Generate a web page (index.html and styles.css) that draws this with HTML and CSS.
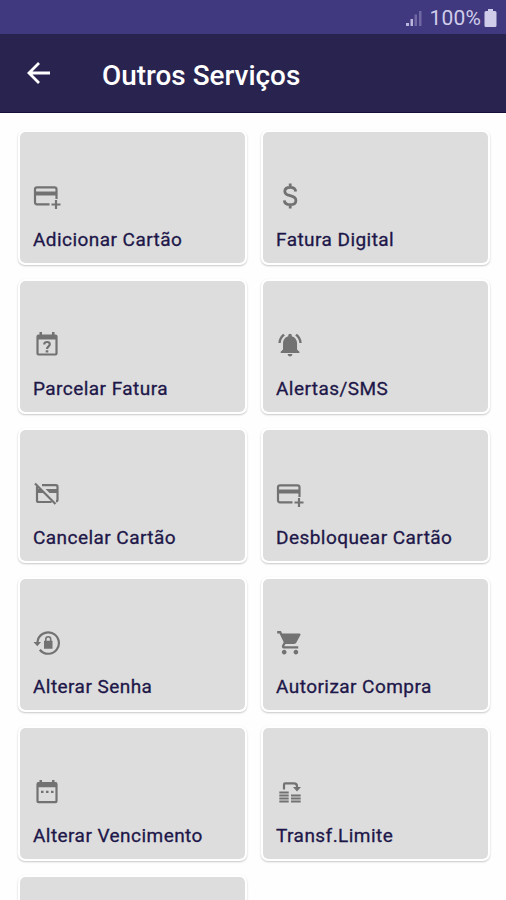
FILE: index.html
```html
<!DOCTYPE html>
<html lang="pt-BR">
<head>
<meta charset="utf-8">
<title>Outros Serviços</title>
<link rel="stylesheet" href="styles.css">
</head>
<body>
<div class="screen">
  <div class="status">
    <svg class="signal" width="17" height="18" viewBox="0 0 17 18"><path class="on" d="M1 14h3v3H1zM5.500 10h2.500v7H5.500z"/><path class="off" d="M9.500 5.500h2.500v11.500H9.500zM14 2h2.500v15H14z"/></svg>
    <span class="percent">100%</span>
    <svg class="battery" width="13" height="18" viewBox="0 0 13 18"><path d="M4 0h5v2h2q1.500 0 1.500 1.500v13q0 1.500-1.500 1.500H2Q.5 18 .5 16.500v-13Q.5 2 2 2h2z"/></svg>
  </div>
  <header class="bar">
    <svg class="back" width="26" height="24" viewBox="0 0 26 24"><path d="M24 12H3M13 2 3 12l10 10"/></svg>
    <h1 class="title">Outros Serviços</h1>
  </header>
  <main class="grid">
    <div class="card">
      <svg class="icon" viewBox="0 0 28 28"><path class="line" d="M16.500 22.300H4q-2 0-2-2V7.300q0-2 2-2h17.500q2 0 2 2V17M23 18v9M18.500 22.500h9"/><path d="M2 9.500h21.500v4H2z"/></svg>
      <span class="label">Adicionar Cartão</span>
    </div>
    <div class="card">
      <svg class="icon" viewBox="0 0 28 28"><path class="line dollar" d="M19.700 9.500C19.400 7 17.500 5.400 14.200 5.400c-3.300 0-5.400 1.600-5.400 4 0 2.600 2.300 3.500 5.400 4.300 3.300.8 5.700 1.900 5.700 4.700 0 2.700-2.300 4.300-5.700 4.300-3.600 0-5.700-1.700-5.900-4.400M14.200 1.500v4M14.200 22.700v3.800"/></svg>
      <span class="label">Fatura Digital</span>
    </div>
    <div class="card">
      <svg class="icon" viewBox="0 0 28 28"><path class="line" d="M4.500 8V5.500q0-1 1-1h17q1 0 1 1v17q0 1-1 1h-17q-1 0-1-1z"/><path d="M4 4h20v4.500H4zM6.500 1H9v4H6.500zM19 1h2.500v4H19z"/><path class="line" d="M11.200 13.500q0-2.500 2.800-2.500t2.800 2.300c0 2-2.800 2.200-2.800 4.700"/><path d="M12.700 19.300h2.600v2.300h-2.600z"/></svg>
      <span class="label">Parcelar Fatura</span>
    </div>
    <div class="card">
      <svg class="icon" viewBox="0 0 28 28"><path transform="translate(0 -.3) scale(1.170)" d="M7.580 4.080 6.150 2.650C3.750 4.480 2.170 7.300 2.030 10.500h2c.15-2.650 1.510-4.970 3.550-6.420zm12.390 6.420h2c-.15-3.200-1.730-6.020-4.120-7.850l-1.420 1.430c2.020 1.450 3.390 3.770 3.540 6.420zM18 11c0-3.070-1.640-5.640-4.500-6.320V4c0-.83-.67-1.500-1.500-1.500s-1.500.67-1.500 1.500v.68C7.630 5.360 6 7.920 6 11v5l-2 2v1h16v-1l-2-2zM12 22c1.100 0 2-.9 2-2h-4c0 1.100.9 2 2 2z"/></svg>
      <span class="label">Alertas/SMS</span>
    </div>
    <div class="card">
      <svg class="icon" viewBox="0 0 28 28"><path class="line" d="M9 5.200h14q1.500 0 1.500 1.500v13q0 1.500-1.500 1.500M18.500 22H5.500Q4 22 4 20.500V6.500M2 3.500l20.500 20.500"/><path d="M12.500 9h12v4h-8zM4 9h3.500l4 4H4z"/></svg>
      <span class="label">Cancelar Cartão</span>
    </div>
    <div class="card">
      <svg class="icon" viewBox="0 0 28 28"><path class="line" d="M16.500 22.300H4q-2 0-2-2V7.300q0-2 2-2h17.500q2 0 2 2V17M23 18v9M18.500 22.500h9"/><path d="M2 9.500h21.500v4H2z"/></svg>
      <span class="label">Desbloquear Cartão</span>
    </div>
    <div class="card">
      <svg class="icon" viewBox="0 -.7 28 28"><path class="line" d="M4.500 12.500a10.700 10.700 0 1 1 2.300 7.500"/><path d="M.5 12.300h7.500l-3.700 4.200zM11 11h8.500v8H11z"/><path class="thin" d="M12.800 12V9.500a2.450 2.450 0 0 1 4.900 0V12"/></svg>
      <span class="label">Alterar Senha</span>
    </div>
    <div class="card">
      <svg class="icon" viewBox="0 0 28 28"><path transform="translate(0 -.3) scale(1.170)" d="M7 18c-1.100 0-1.990.9-1.990 2S5.900 22 7 22s2-.9 2-2-.9-2-2-2zM1 2v2h2l3.600 7.590-1.350 2.450c-.16.28-.25.61-.25.960 0 1.100.9 2 2 2h12v-2H7.420c-.14 0-.25-.11-.25-.25l.03-.12.900-1.630h7.450c.75 0 1.410-.41 1.750-1.030l3.580-6.490A1 1 0 0 0 20 4H5.210l-.94-2H1zm16 16c-1.100 0-1.990.9-1.990 2s.89 2 1.990 2 2-.9 2-2-.9-2-2-2z"/></svg>
      <span class="label">Autorizar Compra</span>
    </div>
    <div class="card">
      <svg class="icon" viewBox="0 -.7 28 28"><path class="line" d="M4.500 8V5.500q0-1 1-1h17q1 0 1 1v17q0 1-1 1h-17q-1 0-1-1z"/><path d="M4 4h20v4.500H4zM6.500 1.300H9V5H6.500zM19 1.300h2.500V5H19zM8 12h2.500v2.300H8zM13 12h2.500v2.300H13zM18 12h2.500v2.300H18z"/></svg>
      <span class="label">Alterar Vencimento</span>
    </div>
    <div class="card">
      <svg class="icon" viewBox="0 -.4 28 28"><path class="line" d="M8 11V6q0-1 1-1h9q3 0 3 3v2"/><path d="M17 8.500h8l-4 4.500z"/><path d="M3.300 13h9.400v2.200H3.300zM3.300 16h9.400v2.200H3.300zM3.300 19h9.400v2.200H3.300zM3.300 22h9.400v2H3.300zM15 16h9.700v2.200H15zM15 19h9.700v2.200H15zM15 22h9.700v2H15z"/></svg>
      <span class="label">Transf.Limite</span>
    </div>
    <div class="card"></div>
  </main>
</div>
</body>
</html>
```
FILE: styles.css
```css
* { box-sizing: border-box; }
body { margin: 0; background: #fff; font-family: Roboto, "Liberation Sans", sans-serif; }
.screen { height: 900px; overflow: hidden; background: #fefefe; }
.status {
  height: 34px;
  padding: 1px 9px 0 0;
  display: flex;
  justify-content: flex-end;
  align-items: center;
  background: #41397f;
  color: #d0cdea;
}
.signal { margin-right: 7px; }
.signal .on { fill: #b9b5dc; }
.signal .off { fill: #6f68a3; }
.percent { font-size: 21px; line-height: 34px; letter-spacing: 0.2px; margin-right: 3px; }
.battery { fill: #d0cdea; }
.bar {
  height: 79px;
  padding-left: 26px;
  display: flex;
  align-items: center;
  background: #292350;
  border-bottom: 1px solid #15103c;
}
.back { margin: 0 50px 1px 0; fill: none; stroke: #fff; stroke-width: 2.8; }
.title { margin: 5px 0 0; font-size: 27.9px; line-height: 34px; font-weight: 500; color: #fff; }
.grid {
  padding: 17px 16px 0 18px;
  display: grid;
  grid-template-columns: 229px 229px;
  grid-auto-rows: 135px;
  gap: 14px;
}
.card {
  padding: 50px 0 0 13px;
  display: flex;
  flex-direction: column;
  align-items: flex-start;
  border: 2px solid #fff;
  border-radius: 7px;
  background: #ddd;
  background-clip: padding-box;
  box-shadow: 0 1px 2px 0 rgba(0, 0, 0, 0.22);
}
.icon { width: 28px; height: 28px; fill: #727272; }
.icon .line { fill: none; stroke: #727272; stroke-width: 2.2; }
.icon .thin { fill: none; stroke: #727272; stroke-width: 1.6; }
.icon .dollar { stroke-width: 2.8; }
.label {
  margin-top: 18px;
  font-size: 19px;
  line-height: 24px;
  letter-spacing: 0.45px;
  white-space: nowrap;
  color: #1d1749;
  -webkit-text-stroke: 0.3px #1d1749;
}
```
